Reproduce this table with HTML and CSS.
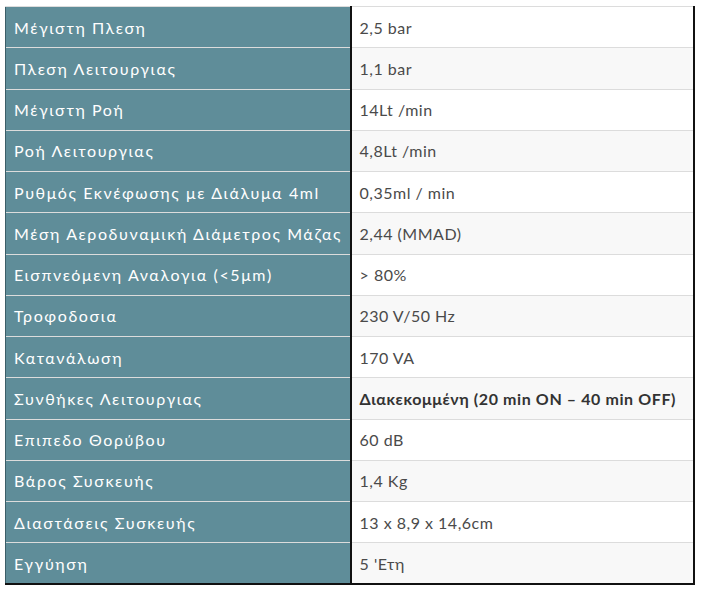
FILE: index.html
```html
<!DOCTYPE html>
<html lang="el">
<head>
<meta charset="utf-8">
<link rel="stylesheet" href="styles.css">
</head>
<body>
<div class="wrap">
<table class="specs">
<colgroup><col class="col-label"><col class="col-value"></colgroup>
<tbody>
<tr><th>Μέγιστη Πλεση</th><td>2,5 bar</td></tr>
<tr><th>Πλεση Λειτουργιας</th><td>1,1 bar</td></tr>
<tr><th>Μέγιστη Ροή</th><td>14Lt /min</td></tr>
<tr><th>Ροή Λειτουργιας</th><td>4,8Lt /min</td></tr>
<tr><th>Ρυθμός Εκνέφωσης με Διάλυμα 4ml</th><td>0,35ml / min</td></tr>
<tr><th>Μέση Αεροδυναμική Διάμετρος Μάζας</th><td>2,44 (MMAD)</td></tr>
<tr><th>Εισπνεόμενη Αναλογια (&lt;5μm)</th><td>&gt; 80%</td></tr>
<tr><th>Τροφοδοσια</th><td>230 V/50 Hz</td></tr>
<tr><th>Κατανάλωση</th><td>170 VA</td></tr>
<tr><th>Συνθήκες Λειτουργιας</th><td class="strong">Διακεκομμένη (20 min ON – 40 min OFF)</td></tr>
<tr><th>Επιπεδο Θορύβου</th><td>60 dB</td></tr>
<tr><th>Βάρος Συσκευής</th><td>1,4 Kg</td></tr>
<tr><th>Διαστάσεις Συσκευής</th><td>13 x 8,9 x 14,6cm</td></tr>
<tr><th>Εγγύηση</th><td>5 'Ετη</td></tr>
</tbody>
</table>
</div>
</body>
</html>
```

FILE: styles.css
```css
html, body {
  margin: 0;
  padding: 0;
  background: #ffffff;
}
.wrap {
  padding: 6px 6px 0 5px;
}
.specs {
  width: 690px;
  table-layout: fixed;
  border-collapse: collapse;
  font-family: "Lato", "Noto Sans", sans-serif;
  font-size: 16px;
  border-bottom: 2px solid #111;
  border-right: 2px solid #111;
}
.col-label {
  width: 345px;
}
.specs th,
.specs td {
  height: 41.25px;
  box-sizing: border-box;
  padding: 0 8px;
  text-align: left;
  vertical-align: middle;
  white-space: nowrap;
  overflow: hidden;
  border-top: 1px solid #dcdcdc;
}
.specs th {
  background: #5f8d99;
  color: #ffffff;
  font-weight: 400;
  letter-spacing: 1.6px;
  padding-right: 0;
  border-right: 2px solid #111;
  border-left: 1px solid #3c5e68;
}
.specs td {
  color: #4a4a4a;
  background: #ffffff;
  letter-spacing: 0.5px;
}
.specs tr:nth-child(even) td {
  background: #f8f8f8;
}
.specs td.strong {
  color: #333333;
  font-weight: 700;
  letter-spacing: 0.6px;
}
```
